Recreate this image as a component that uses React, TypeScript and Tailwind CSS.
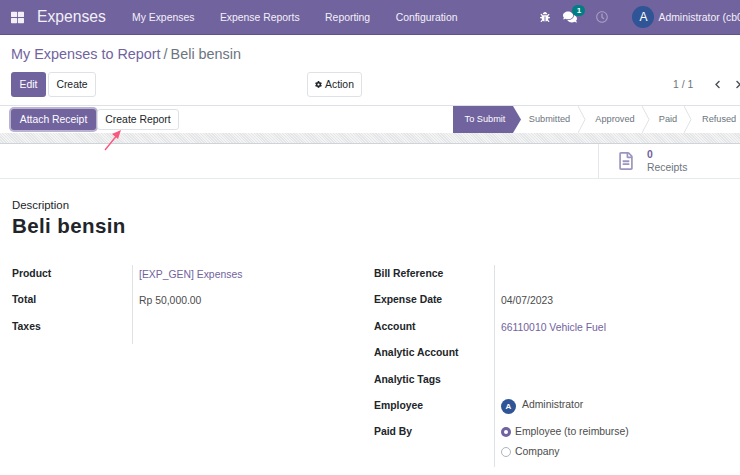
import { FaBug, FaComments, FaCog, FaRegClock, FaChevronLeft, FaChevronRight, FaRegFileAlt, FaThLarge } from "react-icons/fa";

const navItems = ["My Expenses", "Expense Reports", "Reporting", "Configuration"];

function Step({ label, w }: { label: string; w: string }) {
  return (
    <div className={`relative h-full flex items-center justify-center text-[#6c757d] ${w}`}>
      {label}
      <svg className="absolute right-0 top-0 h-full w-[8px]" viewBox="0 0 8 27" fill="none">
        <path d="M0 0 L7 13.5 L0 27" stroke="#dee2e6" strokeWidth="1" />
      </svg>
    </div>
  );
}

function Field({ label, children, link, h = "h-[26.4px]" }: { label: string; children?: React.ReactNode; link?: boolean; h?: string }) {
  return (
    <div className={`flex items-start ${h}`}>
      <div className="w-[120px] shrink-0 font-bold text-[#212529] leading-[17px]">{label}</div>
      <div className={`flex-1 border-l border-[#dee2e6] pl-[6px] pt-[1px] leading-[17px] h-full ${link ? "text-[#71639e]" : "text-[#4c4c4c]"}`}>
        {children}
      </div>
    </div>
  );
}

export default function App() {
  return (
    <div className="w-[740px] h-[475px] overflow-hidden bg-white flex flex-col text-[10.4px] font-['Liberation_Sans',Arial,sans-serif]">
      {/* navbar */}
      <div className="h-[35px] shrink-0 bg-[#71639e] border-b border-[#5f5389] flex items-center text-white whitespace-nowrap">
        <FaThLarge className="shrink-0 ml-[11px] w-[13px] h-[13px] text-[#f2eff7]" />
        <span className="shrink-0 ml-[13px] w-[95px] text-[15.7px] text-[#f2eff7]">Expenses</span>
        <div className="shrink-0 flex gap-[25.5px] pt-[1px]">
          {navItems.map((n) => (
            <span key={n} className="text-[#f3f1f8]">{n}</span>
          ))}
        </div>
        <FaBug className="shrink-0 ml-[83px] w-[10px] h-[10px]" />
        <div className="shrink-0 relative ml-[13px]">
          <FaComments className="w-[14px] h-[14px]" />
          <span className="absolute -top-[5px] left-[9px] w-[13px] h-[11px] rounded-full bg-[#017e84] text-[8px] leading-[11px] font-bold text-center">1</span>
        </div>
        <FaRegClock className="shrink-0 ml-[19px] w-[12px] h-[12px] text-[#a79fc4]" />
        <span className="shrink-0 ml-[24px] w-[22px] h-[22px] rounded-full bg-[#2f5597] text-center leading-[22px] text-[12px]">A</span>
        <span className="shrink-0 ml-[4px] pt-[1px] text-[#f3f1f8]">Administrator (cb0)</span>
      </div>

      {/* control panel */}
      <div className="h-[71px] shrink-0 border-b border-[#dee2e6] px-[11px] flex flex-col whitespace-nowrap">
        <div className="mt-[9px] h-[21px] text-[14.4px] leading-[21px] text-[#6c757d]">
          <span className="text-[#71639e]">My Expenses to Report</span>
          <span className="mx-[3px]">/</span>
          <span>Beli bensin</span>
        </div>
        <div className="mt-[7px] flex items-center">
          <button className="shrink-0 w-[35px] h-[25px] rounded-[3px] bg-[#71639e] text-white font-medium">Edit</button>
          <button className="shrink-0 ml-[2px] w-[48px] h-[25px] rounded-[3px] border border-[#dee2e6] text-[#212529]">Create</button>
          <button className="shrink-0 ml-[211px] w-[55px] h-[25px] rounded-[3px] border border-[#dee2e6] text-[#212529] flex items-center justify-center gap-[3px]">
            <FaCog className="w-[7px] h-[7px]" />Action
          </button>
          <span className="shrink-0 w-[19px] ml-[311px] text-[#6c757d]">1 / 1</span>
          <FaChevronLeft className="shrink-0 ml-[21px] w-[9px] h-[9px] text-[#495057]" />
          <FaChevronRight className="shrink-0 ml-[12px] w-[9px] h-[9px] text-[#495057]" />
        </div>
      </div>

      {/* status bar */}
      <div className="h-[27px] shrink-0 flex items-center pl-[11px] relative whitespace-nowrap">
        <button className="shrink-0 w-[85px] h-[21px] rounded-[3px] bg-[#71639e] text-white ring-2 ring-[#b9b2d1]">Attach Receipt</button>
        <button className="shrink-0 ml-[1px] w-[82px] h-[21px] rounded-[3px] border border-[#dee2e6] text-[#212529]">Create Report</button>
        <div className="ml-auto h-full flex items-center text-[9.2px]">
          <div className="relative w-[60px] h-full bg-[#71639e] text-white flex items-center justify-center pl-[4px]">
            To Submit
            <svg className="absolute -right-[8px] top-0 h-full w-[8px]" viewBox="0 0 8 27">
              <path d="M0 0 L8 13.5 L0 27 Z" fill="#71639e" />
            </svg>
          </div>
          <Step label="Submitted" w="w-[73px]" />
          <Step label="Approved" w="w-[64px] pr-[6px]" />
          <Step label="Paid" w="w-[42px] pr-[6px]" />
          <span className="w-[48px] text-[#6c757d] pl-[10px]">Refused</span>
        </div>
        {/* pink arrow */}
        <svg className="absolute left-[102px] top-[23px] w-[20px] h-[22px] z-10" viewBox="0 0 20 22" fill="none">
          <path d="M3 21 L16 5" stroke="#f8587e" strokeWidth="1.4" />
          <path d="M19 1 L10 5 L16 10 Z" fill="#f8587e" />
        </svg>
      </div>

      {/* hatch strip */}
      <div className="h-[11px] shrink-0 border-b border-[#ced4da] bg-[#eceded] bg-[repeating-linear-gradient(45deg,#e4e6e7_0px,#e4e6e7_1px,#f3f3f3_1px,#f3f3f3_2px)]" />

      {/* stat buttons */}
      <div className="h-[35px] shrink-0 flex justify-end border-b border-[#e6ebea]">
        <div className="w-[142px] border-l border-[#e3e6ea] flex items-center pl-[19px]">
          <FaRegFileAlt className="shrink-0 w-[16px] h-[18px] text-[#9d95bf]" />
          <div className="ml-[13px] flex flex-col leading-[13px]">
            <span className="text-[#71639e] font-bold">0</span>
            <span className="text-[#6c757d]">Receipts</span>
          </div>
        </div>
      </div>

      {/* form sheet */}
      <div className="pl-[12px] pt-[19px] flex-1">
        <div className="leading-[14px] text-[11.4px] text-[#212529]">Description</div>
        <h1 className="mt-[1px] text-[20.5px] leading-[26px] font-bold tracking-[0.4px] text-[#212529]">Beli bensin</h1>
        <div className="mt-[26px] flex">
          <div className="w-[250px] h-fit">
            <Field label="Product" link>[EXP_GEN] Expenses</Field>
            <Field label="Total">Rp 50,000.00</Field>
            <Field label="Taxes" />
          </div>
          <div className="ml-[112px] w-[300px]">
            <Field label="Bill Reference" />
            <Field label="Expense Date">04/07/2023</Field>
            <Field label="Account" link>66110010 Vehicle Fuel</Field>
            <Field label="Analytic Account" />
            <Field label="Analytic Tags" />
            <Field label="Employee">
              <div className="flex items-center">
                <span className="w-[15px] h-[15px] rounded-full bg-[#2f5597] text-white text-[8px] leading-[15px] text-center font-bold mt-[1px]">A</span>
                <span className="ml-[6px] -mt-[2px]">Administrator</span>
              </div>
            </Field>
            <Field label="Paid By" h="h-[44px]">
              <div className="flex items-center -mt-[1px]">
                <span className="w-[10px] h-[10px] rounded-full bg-[#71639e] flex items-center justify-center">
                  <span className="w-[4px] h-[4px] rounded-full bg-white" />
                </span>
                <span className="ml-[4px]">Employee (to reimburse)</span>
              </div>
              <div className="flex items-center mt-[3px]">
                <span className="w-[10px] h-[10px] rounded-full border border-[#adb5bd]" />
                <span className="ml-[4px]">Company</span>
              </div>
            </Field>
          </div>
        </div>
      </div>
    </div>
  );
}
